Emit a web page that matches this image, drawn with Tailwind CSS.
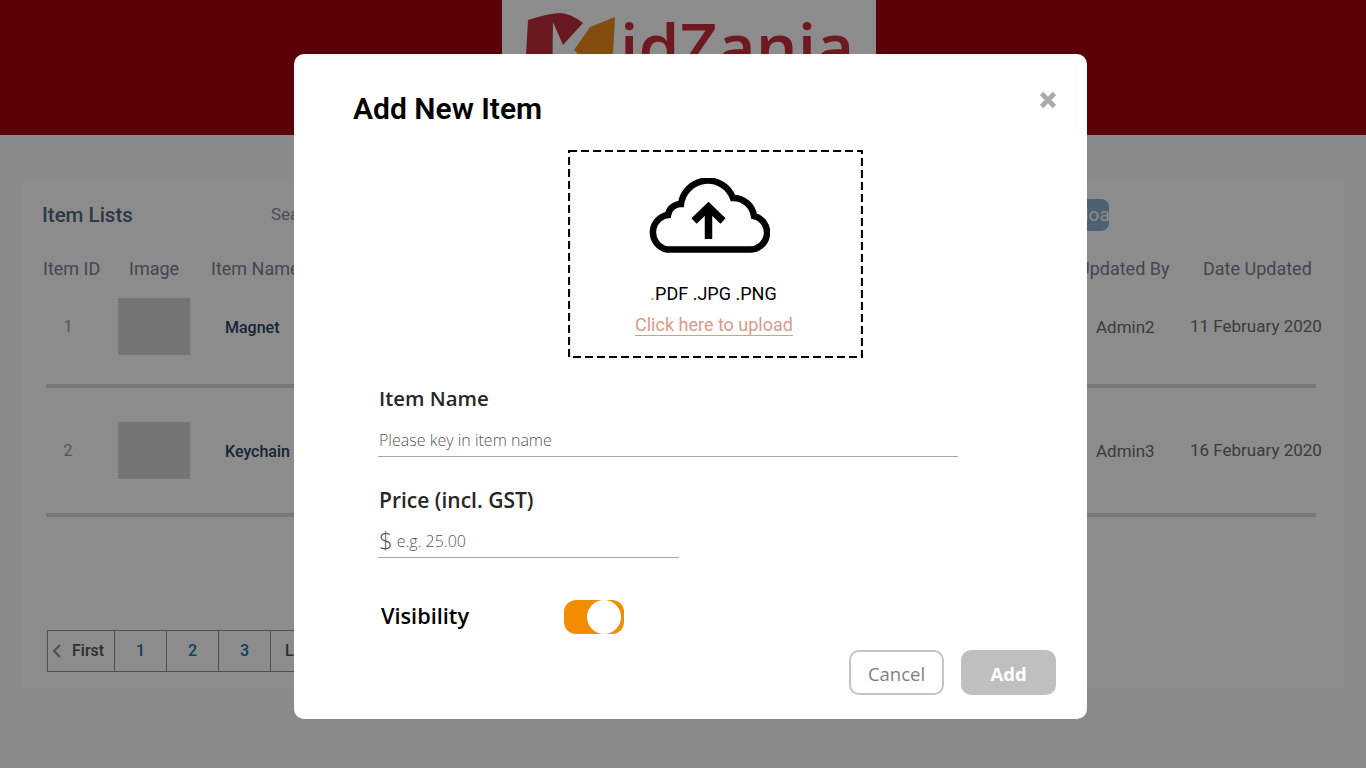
<!DOCTYPE html>
<html lang="en">
<head>
    <meta charset="UTF-8">
    <meta name="viewport" content="width=device-width, initial-scale=1.0">
    <title>Item Lists</title>
    <script src="https://cdn.jsdelivr.net/npm/@tailwindcss/browser@4"></script>
</head>
<body class="relative h-[768px] overflow-hidden bg-[#f7fbff] font-['Roboto',sans-serif]">

    <!-- Header -->
    <header class="flex h-[135px] justify-center bg-[#a7040f] pl-[12px]">
        <div class="flex h-[135px] w-[374px] overflow-hidden bg-white pl-[18px] pt-[10px]">
            <svg class="h-[80px] w-[100px] shrink-0" viewBox="0 0 100 80">
                <path d="M8 10Q30 3 40 3Q50 3 63 13L43 35 33 12 32 80 4 80Z" fill="#c02f3a"/>
                <path d="M70 17 95 7 91 80H75V60L54 40Z" fill="#f08c1e"/>
            </svg>
            <span class="mt-[-10px] font-['Open_Sans',sans-serif] text-[66px] leading-[90px] font-semibold text-[#c82f3a]">idZania</span>
        </div>
    </header>

    <!-- Item list -->
    <section class="mx-[22px] mt-[47px] h-[507px] bg-white px-[20px] pt-[17px]">
        <div class="flex h-[32px] items-center">
            <h2 class="w-[229px] text-[20.5px] font-medium text-[#51687f]">Item Lists</h2>
            <span class="text-[17px] text-[#8a8fa3]">Search</span>
            <button class="ml-auto mr-[215px] h-[32px] w-[90px] overflow-hidden rounded-[8px] bg-[#8fb0d0] pl-[42px] text-left text-[19px] text-white">Upload</button>
        </div>

        <div class="mt-[24px] flex h-[26px] items-center text-[18px] text-[#7d7f96]">
            <span class="w-[87px] pl-px">Item ID</span>
            <span class="w-[82px]">Image</span>
            <span class="w-[200px]">Item Name</span>
            <span class="ml-auto w-[124px]">Updated By</span>
            <span class="mr-[-15px] w-[137px] pl-[1px]">Date Updated</span>
        </div>

        <div class="mt-[17px] flex h-[58px] items-center text-[16px]">
            <span class="w-[52px] text-center text-[#9b9b9b]">1</span>
            <div class="ml-[24px] h-[57px] w-[72px] self-start bg-[#d5d5d5]"></div>
            <span class="ml-[35px] pt-[2px] font-medium text-[#2b4463]">Magnet</span>
            <span class="ml-auto w-[94px] pt-[2px] text-[17px] text-[#6e6e6e]">Admin2</span>
            <span class="w-[134px] text-[17px] whitespace-nowrap text-[#6e6e6e]">11 February 2020</span>
        </div>
        <div class="ml-[4px] mt-[28px] h-[4px] w-[1270px] bg-[#d9d9d9]"></div>

        <div class="mt-[34px] flex h-[58px] items-center text-[16px]">
            <span class="w-[52px] text-center text-[#9b9b9b]">2</span>
            <div class="ml-[24px] h-[57px] w-[72px] self-start bg-[#d5d5d5]"></div>
            <span class="ml-[35px] pt-[2px] font-medium text-[#2b4463]">Keychain</span>
            <span class="ml-auto w-[94px] pt-[2px] text-[17px] text-[#6e6e6e]">Admin3</span>
            <span class="w-[134px] text-[17px] whitespace-nowrap text-[#6e6e6e]">16 February 2020</span>
        </div>
        <div class="ml-[4px] mt-[33px] h-[4px] w-[1270px] bg-[#d9d9d9]"></div>

        <!-- Pagination -->
        <div class="ml-[5px] mt-[113px] flex h-[42px] w-fit border border-[#8f8f8f] text-[16px]">
            <div class="flex w-[66px] items-center gap-[11px] pl-[4px] font-medium text-[#555555]">
                <svg class="h-[14px] w-[9px]" viewBox="0 0 9 14" fill="none" stroke="#8f8f8f" stroke-width="2"><path d="M8 1 2 7l6 6"/></svg>
                First
            </div>
            <div class="flex w-[52px] items-center justify-center border-l border-[#8f8f8f] font-medium text-[#1e73b8]">1</div>
            <div class="flex w-[52px] items-center justify-center border-l border-[#8f8f8f] font-medium text-[#1e73b8]">2</div>
            <div class="flex w-[52px] items-center justify-center border-l border-[#8f8f8f] font-medium text-[#1e73b8]">3</div>
            <div class="flex w-[60px] items-center justify-center border-l border-[#8f8f8f] font-medium text-[#555555]">Last</div>
        </div>
    </section>

    <!-- Dim overlay -->
    <div class="absolute inset-0 bg-black/45"></div>

    <!-- Add New Item modal -->
    <div class="absolute left-[294px] top-[54px] h-[665px] w-[793px] rounded-[10px] bg-white">
        <button class="absolute left-[745px] top-[37px]">
            <svg class="h-[18px] w-[18px]" viewBox="0 0 18 18" fill="none" stroke="#aaaaaa" stroke-width="4.6"><path d="M2.5 2.5l13 13M15.500 2.500l-13 13"/></svg>
        </button>

        <h1 class="pl-[59px] pt-[35px] text-[30px] leading-[39px] font-semibold text-black">Add New Item</h1>

        <!-- Upload box, dashes drawn with svg because the border dashes come out too short -->
        <div class="relative ml-[274px] mt-[22px] flex h-[208px] w-[295px] flex-col items-center pt-[28px]">
            <svg class="absolute inset-0 h-[208px] w-[295px]" viewBox="0 0 295 208" fill="none">
                <rect x="1" y="1" width="293" height="206" stroke="#000000" stroke-width="2.200" stroke-dasharray="8 4"/>
            </svg>
            <svg class="mr-[14px] h-[75px] w-[123px]" viewBox="0 0 123 75" fill="none" stroke="#000000">
                <path stroke-width="6.500" d="M20 71.500H102A17 17 0 0 0 107 38A21 21 0 0 0 86 20A27 27 0 0 0 34 26A13 13 0 0 0 21 37A17.500 17.500 0 0 0 20 71.500Z"/>
                <path stroke-width="7.500" d="M61.500 61V30M47 43 61.500 29 76 43"/>
            </svg>
            <p class="mr-[4px] mt-[30px] text-[18px] leading-[22px] text-black"><span class="text-[#f28c00]">.</span>PDF .JPG .PNG</p>
            <a class="mr-[3px] mt-[9px] border-b border-[#dd9a88] text-[18px] leading-[21px] text-[#dd9a88]">Click here to upload</a>
        </div>

        <div class="ml-[84px] font-['Open_Sans',sans-serif]">
            <label class="mt-[25px] block pl-px text-[20.400px] leading-[30px] font-semibold text-[#262626]">Item Name</label>
            <div class="mt-[16px] h-[28px] w-[580px] border-b border-[#a6a6a6] pl-px text-[16px] leading-[22px] font-light text-[#555555]">Please key in item name</div>

            <label class="mt-[28px] block pl-px text-[21px] leading-[30px] font-semibold text-[#262626]">Price (incl. GST)</label>
            <div class="mt-[10px] flex h-[33px] w-[301px] items-center gap-[4px] border-b border-[#a6a6a6] pl-px text-[16px] font-light text-[#555555]">
                <span class="-mt-[2px] text-[24px] leading-[24px]">$</span>
                <span>e.g. 25.00</span>
            </div>

            <div class="mt-[42px] flex h-[34px] items-center">
                <span class="-mt-[2px] w-[186px] pl-[3px] text-[21.700px] font-semibold text-black">Visibility</span>
                <div class="h-[34px] w-[60px] rounded-[12px] bg-[#f28c00] pl-[23px]">
                    <div class="h-[34px] w-[34px] rounded-full bg-white"></div>
                </div>
            </div>
        </div>

        <div class="absolute left-[555px] top-[596px] flex gap-[17px] font-['Open_Sans',sans-serif] text-[18.500px]">
            <button class="h-[45px] w-[95px] rounded-[10px] border-2 border-[#c4c4c4] pt-[2px] text-[#808080]">Cancel</button>
            <button class="h-[45px] w-[95px] rounded-[10px] bg-[#bfbfbf] pt-[2px] font-bold text-white">Add</button>
        </div>
    </div>
</body>
</html>
